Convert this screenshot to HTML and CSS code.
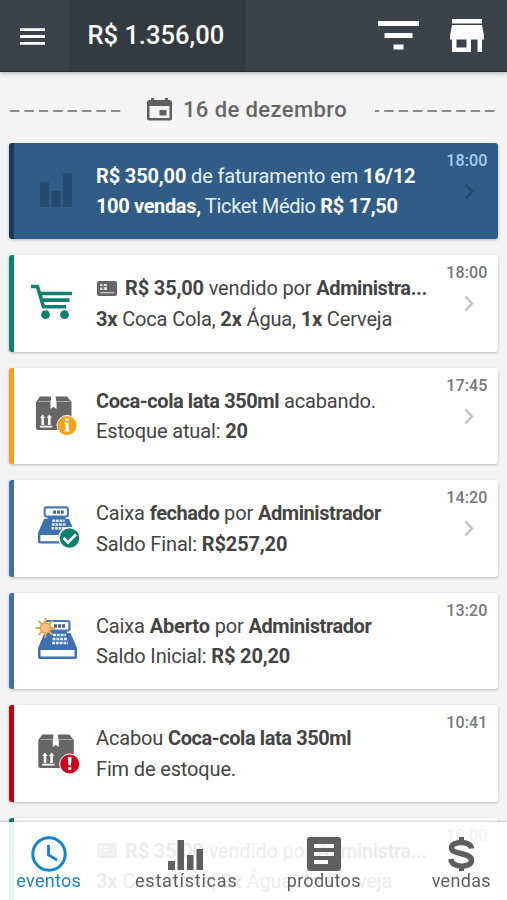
FILE: index.html
```html
<!DOCTYPE html>
<html lang="pt-BR">
<head>
<meta charset="utf-8">
<meta name="viewport" content="width=device-width">
<title>Eventos</title>
<link rel="stylesheet" href="styles.css">
</head>
<body>
<svg class="defs" width="0" height="0" aria-hidden="true">
  <defs>
    <g id="box">
      <path fill="#666" d="M40 28.500H67L71.500 34V59.500Q71.500 62 69 62H38.500Q36 62 36 59.500V34Z"/>
      <path stroke="#aaa" stroke-width="1" d="M38 33.500H70"/>
      <path fill="#fff" d="M51.300 28H55.500L56.500 35V41L53.500 39L50.500 41V35Z"/>
      <path fill="#fff" d="M42.700 46.500L45.500 50H44V57H41.400V50H40ZM49.300 46.500L52 50H50.600V57H48V50H46.600ZM39.800 57.700H52.200V59.500H39.800Z"/>
    </g>
    <g id="register">
      <rect x="45" y="28" width="24.500" height="9.500" rx="2" fill="#fff" stroke="#4a78b4" stroke-width="2.200"/>
      <path stroke="#4a5e80" stroke-width="3.500" stroke-dasharray="3 1" d="M54 33H66"/>
      <path fill="#3f70b0" d="M48 38H67V40H70.500L77 55V64Q77 66 75 66H40Q38 66 38 64V55L44.500 40H48Z"/>
      <path fill="#fff" d="M40.500 57H74.500V63.500H40.500Z"/>
      <path stroke="#dce9f7" stroke-width="2.600" stroke-dasharray="3 .8" d="M53 42H66M52.500 46H67M52 50H68"/>
    </g>
    <g id="cart">
      <path fill="none" stroke="#12806f" stroke-width="3.600" stroke-linejoin="round" d="M31 31.500H37.500L43.500 51.700H66M39 38.500H72M41 45.100H69.500"/>
      <circle cx="45.500" cy="59.700" r="4.400" fill="#12806f"/>
      <circle cx="64.500" cy="59.700" r="4.400" fill="#12806f"/>
    </g>
    <g id="card-glyph">
      <rect x="0" y="0" width="20" height="15" rx="2" fill="#666"/>
      <path fill="#ddd" d="M3 3H5.500V5H3ZM3 6.500H5.500V9H3ZM6.800 3H10V9H6.800ZM3 11.300H17V12.300H3Z"/>
      <path stroke="#666" d="M7 5.500H10"/>
    </g>
  </defs>
</svg>

<header class="topbar">
  <button class="menu" aria-label="Menu"><svg width="25" height="17" viewBox="0 0 25 17"><path stroke="#fff" stroke-width="2.800" d="M0 1.700H25M0 8.500H25M0 15.300H25"/></svg></button>
  <div class="total">R$ 1.356,00</div>
  <div class="actions">
    <svg width="41" height="29" viewBox="0 0 41 29"><path fill="#fff" d="M0 0H41V5H0ZM6.500 12H34.500V17H6.500ZM15.500 23.500H25.500V28.500H15.500Z"/></svg>
    <svg width="34" height="34" viewBox="0 0 34 34"><path fill="#fff" fill-rule="evenodd" d="M2 0H32V4.500H2ZM2 6H32L34 16.500V20.500H32V33H27.500V20.500H21V33H2V20.500H0V16.500ZM6.500 20.500V28.500H16.500V20.500Z"/></svg>
  </div>
</header>

<main class="feed">
  <div class="day">
    <svg class="dash" width="112" height="2"><path stroke="#8b8b8b" stroke-width="2" stroke-dasharray="9.500 4.900" d="M0 1H112"/></svg>
    <h2><svg width="25" height="23" viewBox="0 0 25 23"><path fill="#5f5f5f" fill-rule="evenodd" d="M4 0H7V2H18V0H21V2H22.500Q25 2 25 4.500V20Q25 22.500 22.500 22.500H2.500Q0 22.500 0 20V4.500Q0 2 2.500 2H4ZM2.500 8V20H22.500V8ZM12.500 12H19.500V17.500H12.500Z"/></svg><span>16 de dezembro</span></h2>
    <svg class="dash" width="121" height="2"><path stroke="#8b8b8b" stroke-width="2" stroke-dasharray="9.500 4.900" stroke-dashoffset="5.200" d="M0 1H121"/></svg>
  </div>

  <article class="card summary">
    <svg class="icon" viewBox="14 0 82 96"><path fill="#25496f" d="M40 39H49V64H40ZM51.500 48H60.500V64H51.500ZM63 30.500H72V64H63Z"/></svg>
    <div class="text"><p><b>R$ 350,00</b> de faturamento em <b>16/12</b></p><p class="tight"><b>100 vendas,</b> Ticket Médio <b>R$ 17,50</b></p></div>
    <div class="side"><time>18:00</time><svg class="chevron" viewBox="0 0 10 17"><path d="M1.500 1.500L8 8.500L1.500 15.500"/></svg></div>
  </article>

  <article class="card green">
    <svg class="icon" viewBox="14 0 82 96"><use href="#cart"/></svg>
    <div class="text"><p><svg class="glyph" viewBox="0 0 20 15"><use href="#card-glyph"/></svg><b>R$ 35,00</b> vendido por <b class="tight">Administra...</b></p><p><b>3x</b> Coca Cola, <b>2x</b> Água, <b>1x</b> Cerveja</p></div>
    <div class="side"><time>18:00</time><svg class="chevron" viewBox="0 0 10 17"><path d="M1.500 1.500L8 8.500L1.500 15.500"/></svg></div>
  </article>

  <article class="card orange">
    <svg class="icon" viewBox="14 0 82 96">
      <use href="#box"/>
      <circle cx="67" cy="57.500" r="10" fill="#f7a11b" stroke="#fff"/>
      <path fill="#fff" d="M65.300 50.500H68.700V53H65.300ZM64.500 54.500H68.700V62H69.500V63.500H64.500V62H65.500V56H64.500Z"/>
    </svg>
    <div class="text"><p><b class="tight">Coca-cola lata 350ml</b> acabando.</p><p>Estoque atual: <b>20</b></p></div>
    <div class="side"><time>17:45</time><svg class="chevron" viewBox="0 0 10 17"><path d="M1.500 1.500L8 8.500L1.500 15.500"/></svg></div>
  </article>

  <article class="card blue">
    <svg class="icon" viewBox="14 0 82 96">
      <use href="#register" transform="translate(1.900 .8) scale(.95)"/>
      <circle cx="69.500" cy="58" r="10.500" fill="#12806f" stroke="#fff" stroke-width="1.500"/>
      <path fill="none" stroke="#fff" stroke-width="2.600" d="M63.500 58L68 62.500L76 54.500"/>
    </svg>
    <div class="text"><p>Caixa <b class="tight">fechado</b> por <b class="tight">Administrador</b></p><p>Saldo Final: <b>R$257,20</b></p></div>
    <div class="side"><time>14:20</time><svg class="chevron" viewBox="0 0 10 17"><path d="M1.500 1.500L8 8.500L1.500 15.500"/></svg></div>
  </article>

  <article class="card blue">
    <svg class="icon" viewBox="14 0 82 96">
      <use href="#register"/>
      <g stroke="#e9a85a" stroke-width="1.800"><path d="M45.500 25V45M35.500 35H55.500M38.500 28L52.500 42M38.500 42L52.500 28"/></g>
      <circle cx="45.500" cy="35" r="5.200" fill="#f6c27d" stroke="#e9a14c" stroke-width="1.500"/>
    </svg>
    <div class="text"><p>Caixa <b>Aberto</b> por <b class="tight">Administrador</b></p><p>Saldo Inicial: <b>R$ 20,20</b></p></div>
    <div class="side"><time>13:20</time></div>
  </article>

  <article class="card red">
    <svg class="icon" viewBox="14 0 82 96">
      <use href="#box" x="2.300" y="1"/>
      <circle cx="69.700" cy="59" r="10" fill="#d0021b" stroke="#fff"/>
      <path fill="#fff" d="M67.700 52H71.700L70.900 60.500H68.500ZM68.200 62H71.200V65H68.200Z"/>
    </svg>
    <div class="text"><p>Acabou <b class="tight">Coca-cola lata 350ml</b></p><p>Fim de estoque.</p></div>
    <div class="side"><time>10:41</time></div>
  </article>

  <article class="card green">
    <svg class="icon" viewBox="14 0 82 96"></svg>
    <div class="text"><p><svg class="glyph" viewBox="0 0 20 15"><use href="#card-glyph"/></svg><b>R$ 35,00</b> vendido por <b class="tight">Administra...</b></p><p><b>3x</b> Coca Cola, <b>2x</b> Água, <b>1x</b> Cerveja</p></div>
    <div class="side"><time>18:00</time></div>
  </article>
</main>

<nav class="tabs">
  <a class="tab active"><svg width="36" height="36" viewBox="0 0 36 36"><circle cx="18" cy="18" r="16.200" fill="none" stroke="#1583cf" stroke-width="3"/><path fill="none" stroke="#1583cf" stroke-width="2.800" d="M17.500 9V19L26 24"/></svg><span>eventos</span></a>
  <a class="tab"><svg width="36" height="36" viewBox="0 0 36 36"><path fill="#5f5f5f" d="M0 25H7V34H0ZM9.500 4H16V34H9.500ZM19 19H25.500V34H19ZM28.500 13H35V34H28.500Z"/></svg><span class="wide">estatísticas</span></a>
  <a class="tab"><svg width="36" height="36" viewBox="0 0 36 36"><path fill="#5f5f5f" fill-rule="evenodd" d="M4 1H32Q35 1 35 4V32Q35 35 32 35H4Q1 35 1 32V4Q1 1 4 1ZM8 8V12H28V8ZM8 16V20H28V16ZM8 24V28H22V24Z"/></svg><span>produtos</span></a>
  <a class="tab"><svg width="36" height="36" viewBox="0 0 36 36"><path fill="none" stroke="#5f5f5f" stroke-width="5.500" d="M28.500 12.500C28 4.500 8.500 4.500 8.500 12C8.500 19 28.500 16 28.500 24.500C28.500 32 8.500 32.500 8 23"/><path stroke="#5f5f5f" stroke-width="5" d="M18.500 1V7M18.500 29V35"/></svg><span>vendas</span></a>
</nav>
</body>
</html>
```

FILE: styles.css
```css
* { box-sizing: border-box; }

body {
  margin: 0;
  height: 900px;
  overflow: hidden;
  background: #f4f4f4;
  color: #444;
  font-family: Roboto, "Liberation Sans", sans-serif;
}

.defs { position: absolute; }
svg { display: block; flex: none; }
p, h2 { margin: 0; }

.topbar {
  display: flex;
  height: 71.500px;
  background: #3b4249;
  border-bottom: 1px solid #2a3036;
  box-shadow: 0 1px 5px rgba(0, 0, 0, .3);
}
.menu {
  width: 69px;
  padding: 2px 0 0 20px;
  border: 0;
  background: none;
}
.total {
  width: 176px;
  padding-left: 18.500px;
  background: #333b41;
  color: #fff;
  font-size: 25.500px;
  font-weight: 500;
  line-height: 71px;
  white-space: nowrap;
}
.actions {
  display: flex;
  flex: 1;
  justify-content: flex-end;
  gap: 31px;
  padding: 19px 23px 0 0;
}
.actions svg:first-child { margin-top: 2px; }

.feed { padding: 0 9px; }
.day {
  display: flex;
  align-items: center;
  justify-content: space-between;
  height: 71px;
  padding: 5px 2px 0 1px;
}
.day h2 {
  display: flex;
  align-items: center;
  gap: 11px;
  margin-right: 3px;
  color: #666;
  font-size: 22px;
  font-weight: 500;
  letter-spacing: .4px;
  white-space: nowrap;
}
.dash { margin-top: 3px; }

.card {
  display: flex;
  height: 96.500px;
  margin-bottom: 16px;
  border-left: 5px solid;
  border-radius: 3px;
  background: #fff;
  box-shadow: 0 1px 3px rgba(0, 0, 0, .24);
}
.icon { width: 82px; height: 96px; }
.text {
  flex: 1;
  padding-top: 18px;
  font-size: 20px;
  letter-spacing: -.15px;
  line-height: 30.500px;
  white-space: nowrap;
}
.text b { font-weight: 700; }
.text .tight { letter-spacing: -.42px; }
.text p.tight { letter-spacing: -.35px; }
.glyph {
  display: inline-block;
  width: 20px;
  height: 15px;
  margin: 0 8px 3px 1px;
  vertical-align: middle;
}
.side {
  display: flex;
  flex-direction: column;
  align-items: flex-end;
  padding: 8px 10.500px 0 0;
  color: #777;
  font-size: 16px;
  font-weight: 500;
  letter-spacing: .15px;
  line-height: 20px;
}
.chevron {
  width: 10px;
  height: 17px;
  margin: 12px 14px 0 0;
  fill: none;
  stroke: #c3c3c3;
  stroke-width: 2.500;
}
.green { border-color: #12806f; }
.orange { border-color: #f7a11b; }
.blue { border-color: #3f6fae; }
.red { border-color: #c8000c; }
.summary {
  border-color: #1c395c;
  background: #2f5d88;
  color: #e4f1ff;
}
.summary b { color: #fff; }
.summary .side { color: #a9cdf2; }
.summary .chevron { stroke: #25496f; }

.tabs {
  position: fixed;
  inset: auto -23px 0 -20px;
  display: flex;
  height: 78px;
  padding-top: 14px;
  background: rgba(255, 255, 255, .9);
  box-shadow: 0 -1px 2px rgba(0, 0, 0, .2);
}
.tab {
  display: flex;
  flex: 1;
  flex-direction: column;
  align-items: center;
  color: #5f5f5f;
  font-size: 18px;
  letter-spacing: .3px;
  line-height: 18px;
}
.wide { letter-spacing: .8px; }
.active { color: #1583cf; }
```
